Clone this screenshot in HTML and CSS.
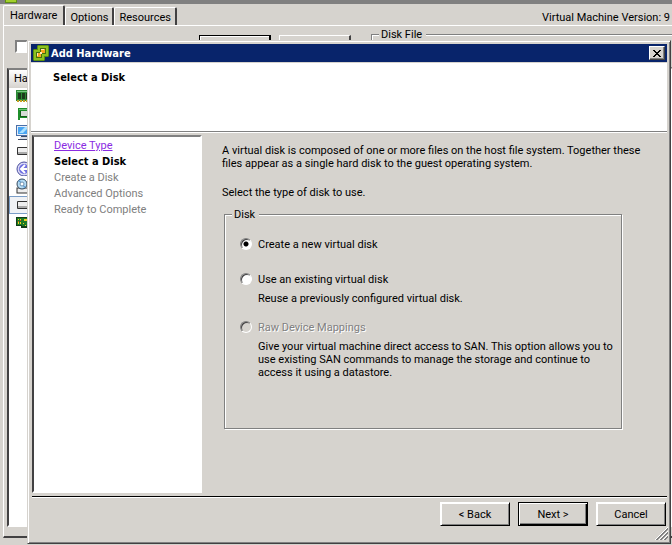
FILE: index.html
```html
<!DOCTYPE html>
<html lang="en">
<head>
    <meta charset="UTF-8">
    <title>Add Hardware</title>
    <link rel="stylesheet" href="styles.css">
</head>
<body>

    <!-- virtual machine properties window -->
    <div class="window">
        <div class="window_title">
            <svg class="window_icon" width="12" height="3" viewBox="0 0 12 3">
                <rect width="12" height="3" fill="#5f8f14"/>
                <rect x="1" width="10" height="2" fill="#a3d02c"/>
            </svg>
        </div>
        <div class="tab_bar">
            <button type="button" class="tab active">Hardware</button>
            <button type="button" class="tab">Options</button>
            <button type="button" class="tab">Resources</button>
            <span class="version">Virtual Machine Version: 9</span>
        </div>
        <div class="tab_page">
            <div class="toolbar">
                <input type="checkbox" class="check" aria-label="Show all devices">
                <button type="button" class="tool_btn default" aria-label="Add"></button>
                <button type="button" class="tool_btn" aria-label="Remove"></button>
                <fieldset class="disk_file">
                    <legend>Disk File</legend>
                </fieldset>
            </div>
            <div class="device_list">
                <div class="device_head">Ha</div>
                <ul>
                    <li>
                        <svg width="16" height="16" viewBox="0 0 16 16">
                            <rect y="2" width="16" height="11" fill="#2d8a36"/>
                            <path d="M1 3h15v1H1z" fill="#7cc884"/>
                            <path d="M2 5h3v6H2zM6 5h3v6H6zM10 5h3v6h-3z" fill="#1c3c1c"/>
                            <path d="M1 12h2v2H1zM4 12h2v2H4zM7 12h2v2H7zM10 12h2v2h-2z" fill="#c9a227"/>
                        </svg>
                    </li>
                    <li>
                        <svg width="16" height="16" viewBox="0 0 16 16">
                            <path d="M2 2h14v10H4v2H2z" fill="#1f8f2b"/>
                            <path d="M3 3h13v1H3z" fill="#6ac274"/>
                            <rect x="4" y="5" width="12" height="6" fill="#145c1c"/>
                            <rect x="5" y="5" width="11" height="5" fill="#d8dcd8"/>
                        </svg>
                    </li>
                    <li>
                        <svg width="16" height="16" viewBox="0 0 16 16">
                            <rect y="1" width="16" height="11" fill="#4a6fa8"/>
                            <rect x="1" y="2" width="15" height="9" fill="#e6eef8"/>
                            <rect x="2" y="3" width="14" height="7" fill="#4aa5f2"/>
                            <path d="M3 9l6-6h4L7 9z" fill="#a8e0ff"/>
                            <path d="M5 12h11v1H5zM2 15h14v1H2z" fill="#3e4c66"/>
                            <path d="M4 13h12v2H4z" fill="#d9dde6"/>
                        </svg>
                    </li>
                    <li>
                        <svg width="16" height="16" viewBox="0 0 16 16">
                            <rect x="1" y="5" width="18" height="8" rx="1" fill="#333"/>
                            <rect x="2" y="6" width="17" height="4" fill="#eee"/>
                            <rect x="2" y="10" width="17" height="2" fill="#aaa"/>
                        </svg>
                    </li>
                    <li>
                        <svg width="16" height="16" viewBox="0 0 16 16">
                            <circle cx="8" cy="9" r="7" fill="#d9d8f5" stroke="#4a4f9e"/>
                            <circle cx="8" cy="9" r="5" fill="#6f6fe0"/>
                            <path d="M9 5L5 9l4 4M6 9h7" fill="none" stroke="#fff" stroke-width="2"/>
                        </svg>
                    </li>
                    <li>
                        <svg width="16" height="16" viewBox="0 0 16 16">
                            <rect x="1" y="10" width="16" height="5" fill="#eee" stroke="#333"/>
                            <circle cx="6" cy="6" r="5" fill="#b5dcf5" stroke="#33475c"/>
                            <path d="M6 6L2 3l2-1zM6 6l4 3-2 1z" fill="#5f9fd6"/>
                            <circle cx="6" cy="6" r="2" fill="#fff" stroke="#6b8fae"/>
                        </svg>
                    </li>
                    <li class="selected">
                        <svg width="16" height="16" viewBox="0 0 16 16">
                            <rect x="1" y="4" width="18" height="8" rx="1" fill="#333"/>
                            <rect x="2" y="5" width="17" height="4" fill="#eee"/>
                            <rect x="2" y="9" width="17" height="2" fill="#aaa"/>
                        </svg>
                    </li>
                    <li>
                        <svg width="16" height="16" viewBox="0 0 16 16">
                            <path d="M0 3h16v11H5v-2H0z" fill="#123d16"/>
                            <path d="M1 4h15v8H6v-1H1z" fill="#1c7a24"/>
                            <path d="M2 5h1v1H2zM4 5h1v1H4zM2 8h1v2H2zM4 8h1v2H4zM8 5h3v2H8zM7 9h1v1H7zM9 11h1v1H9z" fill="#f0d020"/>
                            <path d="M4 6h1v1H4zM2 7h1v1H2z" fill="#e04020"/>
                        </svg>
                    </li>
                </ul>
            </div>
        </div>
    </div>

    <!-- add hardware wizard -->
    <div class="dialog" role="dialog" aria-labelledby="dialog_title">
        <div class="dialog_title">
            <svg width="16" height="16" viewBox="0 0 16 16">
                <path d="M5 0h10l1 1v10l-1 1h-3v3l-1 1H1l-1-1V5l1-1h3V1z" fill="#5b8f10"/>
                <path d="M5 1h10v10h-4v4H1V5h4z" fill="#8cc220"/>
                <path d="M7 3h6v6H9v4H3V7h4z" fill="#45700c"/>
                <path d="M8 4h4v4H8zM4 8h4v4H4z" fill="#f7a61e"/>
                <path d="M8 4h3v1H8zM4 8h1v3H4zM7 7h2v2H7z" fill="#ffe9b8"/>
            </svg>
            <span id="dialog_title">Add Hardware</span>
            <button type="button" class="close" aria-label="Close">
                <svg width="8" height="7" viewBox="0 0 8 7" shape-rendering="crispEdges">
                    <path d="M0 0h2v1H0zM6 0h2v1H6zM1 1h2v1H1zM5 1h2v1H5zM2 2h4v1H2zM3 3h2v1H3zM2 4h4v1H2zM1 5h2v1H1zM5 5h2v1H5zM0 6h2v1H0zM6 6h2v1H6z"/>
                </svg>
            </button>
        </div>
        <div class="dialog_head">Select a Disk</div>
        <div class="dialog_body">
            <nav class="steps">
                <a href="#device_type">Device Type</a>
                <span class="current">Select a Disk</span>
                <span>Create a Disk</span>
                <span>Advanced Options</span>
                <span>Ready to Complete</span>
            </nav>
            <div class="content">
                <p>A virtual disk is composed of one or more files on the host file system. Together these<br>files appear as a single hard disk to the guest operating system.</p>
                <p>Select the type of disk to use.</p>
                <fieldset class="disk">
                    <legend>Disk</legend>
                    <div class="option new">
                        <input type="radio" name="disk" id="disk_new" checked>
                        <label for="disk_new">Create a new virtual disk</label>
                    </div>
                    <div class="option">
                        <input type="radio" name="disk" id="disk_existing">
                        <label for="disk_existing">Use an existing virtual disk</label>
                        <p>Reuse a previously configured virtual disk.</p>
                    </div>
                    <div class="option">
                        <input type="radio" name="disk" id="disk_raw" disabled>
                        <label for="disk_raw">Raw Device Mappings</label>
                        <p>Give your virtual machine direct access to SAN. This option allows you to<br>use existing SAN commands to manage the storage and continue to<br>access it using a datastore.</p>
                    </div>
                </fieldset>
            </div>
        </div>
        <div class="dialog_foot">
            <button type="button" class="btn">&lt; Back</button>
            <button type="button" class="btn default">Next &gt;</button>
            <button type="button" class="btn">Cancel</button>
        </div>
        <svg class="grip" width="13" height="13" viewBox="0 0 13 13">
            <path d="M0 13L13 0M4 13l9-9M8 13l5-5" stroke="#fff"/>
            <path d="M1 13L13 1M2 13L13 2M5 13l8-8M6 13l7-7M9 13l4-4M10 13l3-3" stroke="#808080"/>
        </svg>
    </div>

</body>
</html>
```

FILE: styles.css
```css
* {
    box-sizing: border-box;
}
body {
    margin: 0;
    height: 100vh;
    overflow: hidden;
    position: relative;
    background: #d6d3ce;
    color: #000;
    font: 11px/13px Roboto, "DejaVu Sans", sans-serif;
}
button,
input {
    margin: 0;
    padding: 0;
    font: inherit;
    color: inherit;
}
p,
ul {
    margin: 0;
    padding: 0;
    list-style: none;
}
svg {
    display: block;
    flex: none;
}
fieldset {
    min-width: 0;
    margin: 0;
    border: 1px solid #808080;
    box-shadow: 1px 1px 0 #fff, inset 1px 1px 0 #fff;
}
legend {
    padding: 0 4px 0 2px;
    background: #d6d3ce;
}

/* properties window */
.window {
    display: flex;
    flex-direction: column;
    height: 100%;
    padding-bottom: 7px;
}
.window_title {
    height: 4px;
    padding-left: 5px;
    background: #808080;
}
.tab_bar {
    display: flex;
    align-items: flex-end;
    height: 21px;
    padding-left: 3px;
}
.tab {
    height: 18px;
    padding: 1px 4px 0;
    background: #d6d3ce;
    border: 1px solid #fff;
    border-right: 2px solid #424142;
    border-bottom: none;
    border-radius: 2px 2px 0 0;
}
.tab.active {
    height: 20px;
    padding: 0 6px;
}
.version {
    margin: 0 2px 1px auto;
}
.tab_page {
    flex: 1;
    display: flex;
    flex-direction: column;
    padding: 2px 0 9px 3px;
    margin-left: 3px;
    border-left: 1px solid #fff;
    border-top: 1px solid #fff;
    border-bottom: 2px solid #424142;
}
.toolbar {
    display: flex;
    height: 40px;
    padding-left: 8px;
}
.check {
    appearance: none;
    width: 13px;
    height: 13px;
    margin: 12px 171px 0 0;
    background: #fff;
    border: 2px solid #808080;
    border-color: #808080 #fff #fff #808080;
}
.tool_btn {
    width: 72px;
    height: 23px;
    margin: 7px 8px 0 0;
    background: #d6d3ce;
    border: 1px solid #fff;
    border-right: 2px solid #424142;
}
.tool_btn.default {
    border: 1px solid #000;
    border-right-width: 2px;
    box-shadow: inset 1px 1px 0 #fff;
}
.disk_file {
    flex: 1;
    height: 40px;
    margin-left: 12px;
    padding: 0 7px;
    border-right: none;
}
.device_list {
    flex: 1;
    background: #fff;
    border: 2px solid #808080;
    border-color: #808080 #fff #fff #424142;
}
.device_head {
    height: 18px;
    padding: 2px 5px;
    background: linear-gradient(#fff, #d6d3ce);
}
.device_list li {
    height: 18px;
    padding: 0 7px;
}
.device_list li.selected {
    padding: 0 6px;
    background: #f0f2f5;
    border: 1px solid #7b9ec8;
}

/* wizard dialog, floats over the window */
.dialog {
    position: absolute;
    inset: 40px 1px 1px 27px;
    display: flex;
    flex-direction: column;
    padding: 2px;
    background: #d6d3ce;
    border: 1px solid #d6d3ce;
    border-right-color: #424142;
    border-bottom-color: #424142;
    box-shadow: inset 1px 1px 0 #fff, inset -1px -1px 0 #808080;
}
.dialog_title {
    display: flex;
    align-items: center;
    height: 19px;
    margin: 1px 1px 0;
    padding: 0 2px;
    gap: 2px;
    background: #08246b;
    border-bottom: 1px solid #d6d3ce;
    color: #fff;
    font: bold 11px/13px "DejaVu Sans Condensed", "DejaVu Sans", sans-serif;
}
.close {
    display: flex;
    align-items: center;
    justify-content: center;
    width: 16px;
    height: 14px;
    margin-left: auto;
    background: #d6d3ce;
    border: 1px solid #fff;
    border-right-color: #424142;
    border-bottom-color: #424142;
    box-shadow: inset -1px -1px 0 #808080;
    color: #000;
}
.dialog_head {
    height: 69px;
    margin: 0 1px;
    padding: 8px 22px;
    background: #fff;
    border-bottom: 1px solid #808080;
    box-shadow: 0 1px 0 #fff;
    font: bold 11px/13px "DejaVu Sans Condensed", "DejaVu Sans", sans-serif;
}
.dialog_body {
    flex: 1;
    display: flex;
    gap: 20px;
    padding: 3px 46px 3px 2px;
}
.steps {
    display: flex;
    flex-direction: column;
    flex: none;
    width: 170px;
    padding: 1px 20px;
    background: #fff;
    border: 2px solid #808080;
    border-color: #808080 #fff #fff #424142;
    color: #808080;
    line-height: 16px;
}
.steps a {
    color: #8a2be2;
}
.steps .current {
    color: #000;
    font: bold 11px/16px "DejaVu Sans Condensed", "DejaVu Sans", sans-serif;
}
.content {
    flex: 1;
    min-width: 0;
    padding-top: 9px;
    white-space: nowrap;
}
.content > p {
    margin-bottom: 16px;
}
.disk {
    height: 221px;
    margin: -7px 0 0 2px;
    padding: 17px 15px;
}
.disk legend {
    margin-left: -8px;
}
.option {
    display: grid;
    grid-template-columns: 12px 1fr;
    column-gap: 6px;
    row-gap: 6px;
    margin-bottom: 16px;
}
.option.new {
    margin-bottom: 22px;
}
.option p {
    grid-column: 2;
}
.option input {
    appearance: none;
    width: 12px;
    height: 12px;
    background: #fff;
    border: 1px solid #808080;
    border-color: #808080 #fff #fff #808080;
    border-radius: 50%;
    box-shadow: inset 1px 1px 0 #424142;
}
.option input:checked {
    background: radial-gradient(circle, #000 2px, #fff 3px);
}
.option input:disabled {
    background: #d6d3ce;
}
.option input:disabled + label {
    color: #808080;
    text-shadow: 1px 1px 0 #fff;
}
.dialog_foot {
    display: flex;
    justify-content: flex-end;
    gap: 8px;
    height: 45px;
    margin: 0 1px 0 2px;
    padding: 5px 1px;
    border-top: 1px solid #000;
    box-shadow: inset 0 1px 0 #fff;
}
.btn {
    width: 70px;
    height: 24px;
    background: #d6d3ce;
    border: 1px solid #fff;
    border-right-color: #000;
    border-bottom-color: #000;
    box-shadow: inset 1px 1px 0 #fff, inset -1px -1px 0 #808080;
}
.btn.default {
    border-color: #000;
    box-shadow: inset 1px 1px 0 #fff, inset -1px -1px 0 #000, inset -2px -2px 0 #808080;
}
.grip {
    position: absolute;
    right: 2px;
    bottom: 3px;
}
```
